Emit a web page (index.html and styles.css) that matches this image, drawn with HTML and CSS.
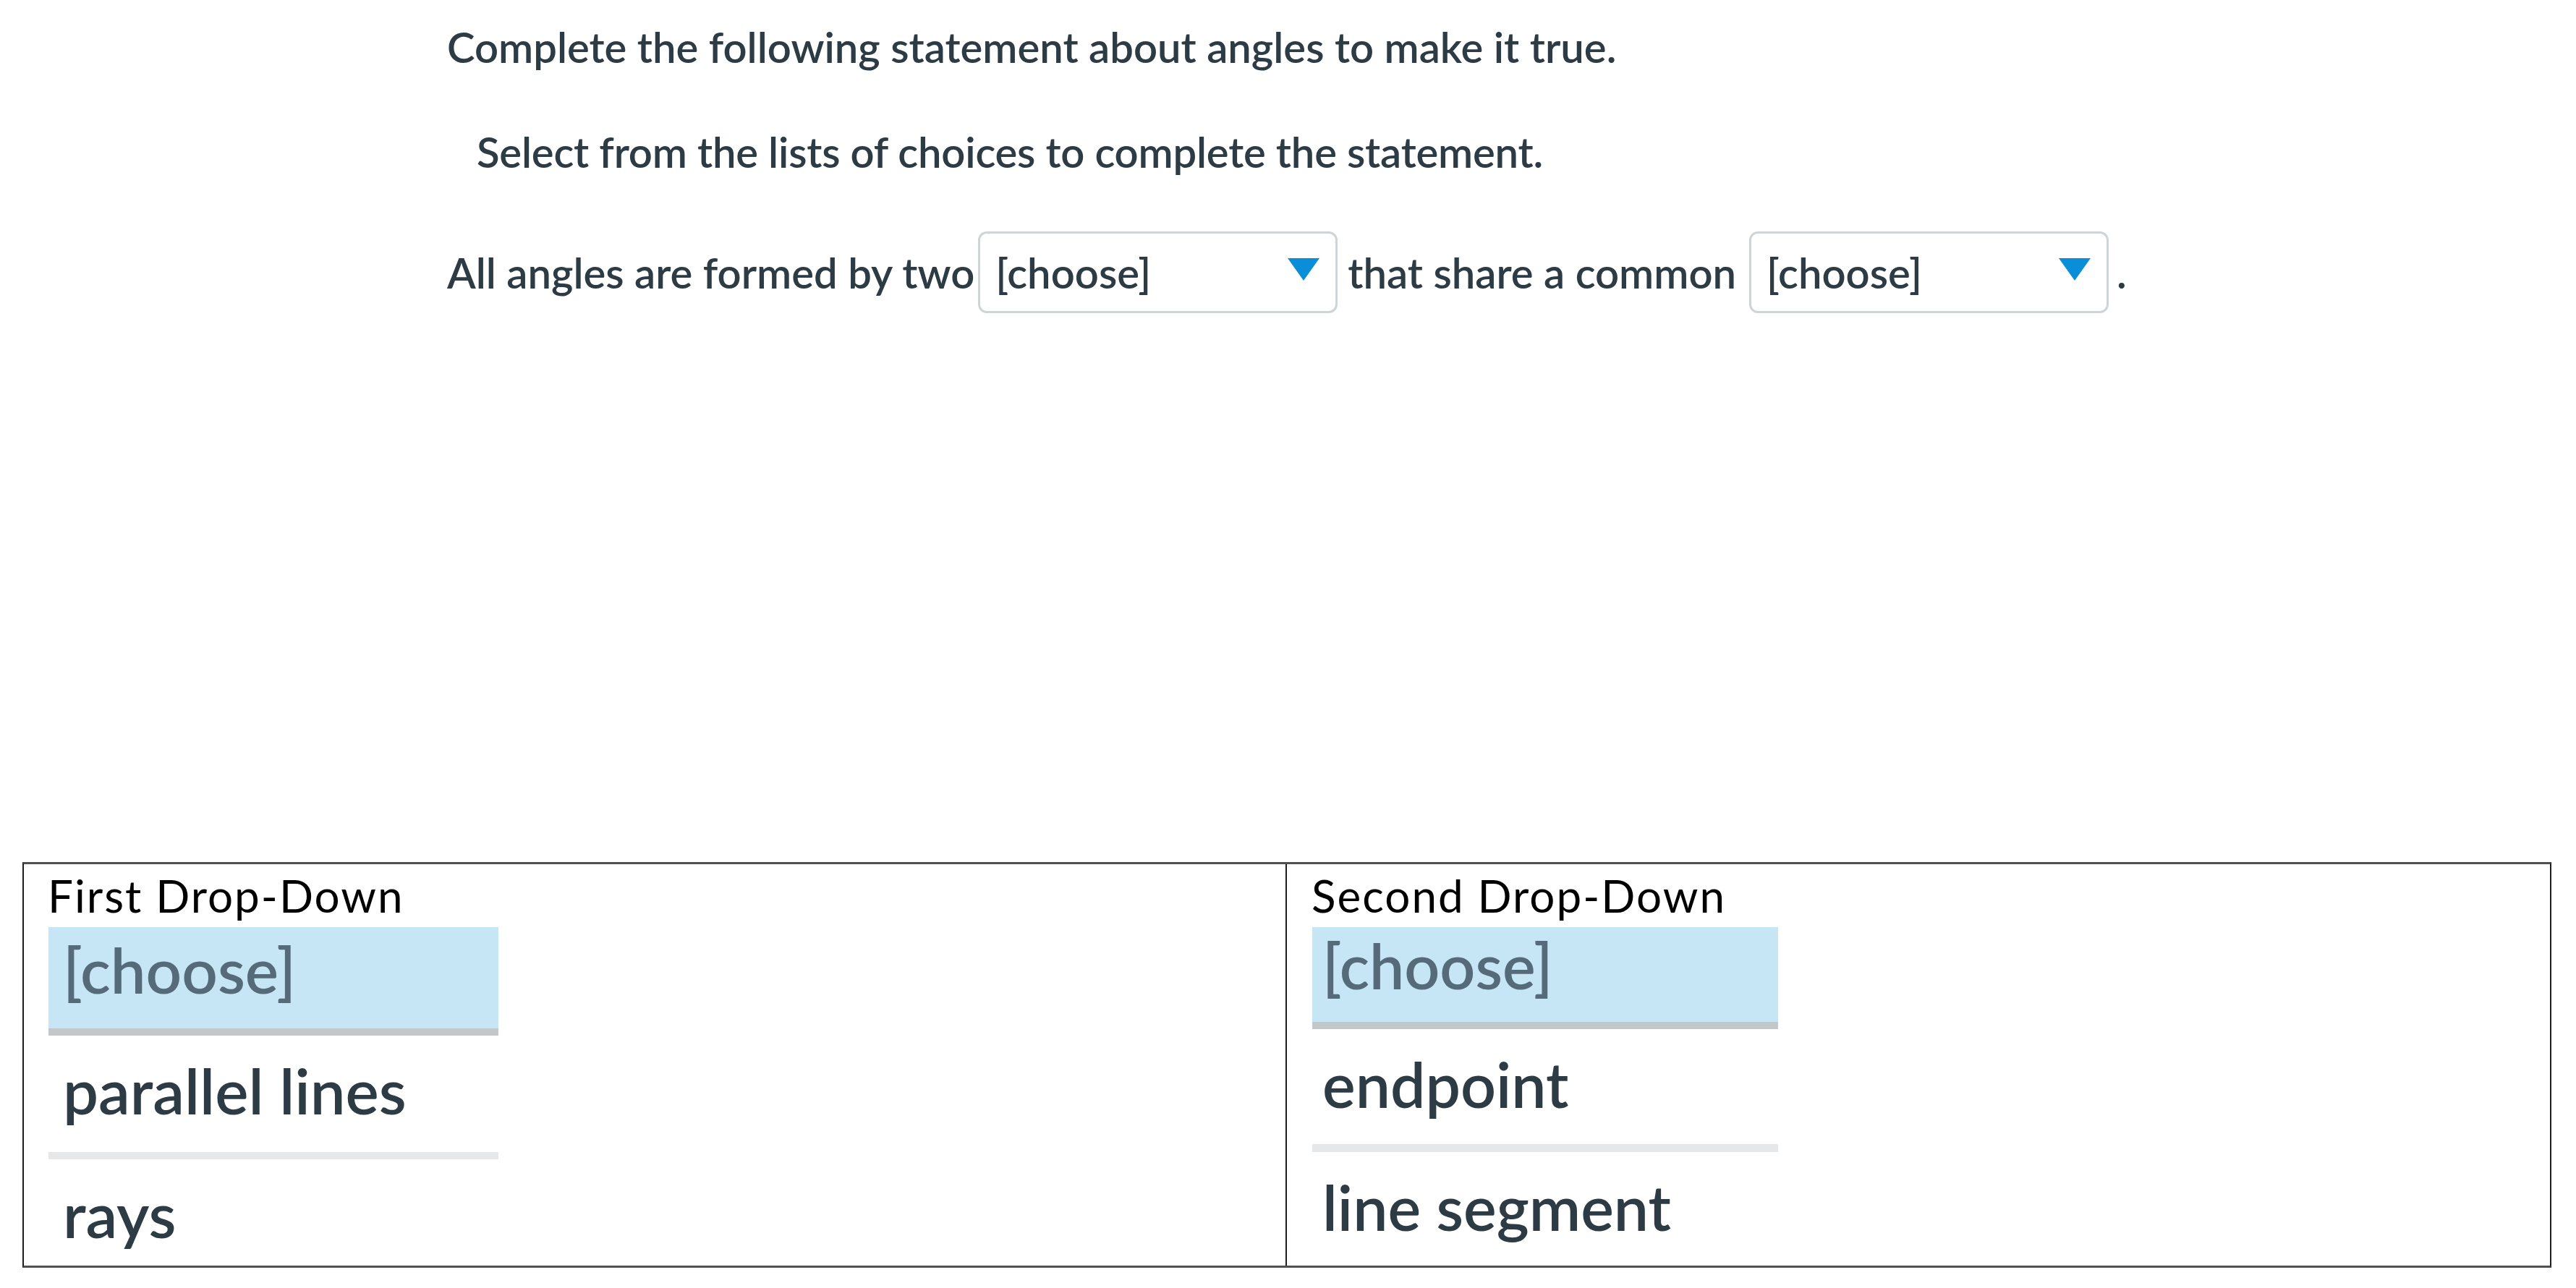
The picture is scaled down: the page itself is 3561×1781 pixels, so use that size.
FILE: index.html
```html
<!DOCTYPE html>
<html lang="en">
<head>
<meta charset="utf-8">
<title>Angles statement</title>
<link rel="stylesheet" href="styles.css">
</head>
<body>
<main class="page">
  <section class="question">
    <p class="prompt">Complete the following statement about angles to make it true.</p>
    <p class="instructions">Select from the lists of choices to complete the statement.</p>
    <div class="statement">
      <span class="phrase">All angles are formed by two</span>
      <div class="select select-first">
        <span class="select-value">[choose]</span>
        <svg class="caret" width="44" height="31" viewBox="0 0 44 31"><polygon points="0,0 44,0 22,31"/></svg>
      </div>
      <span class="phrase">that share a common</span>
      <div class="select select-second">
        <span class="select-value">[choose]</span>
        <svg class="caret" width="44" height="31" viewBox="0 0 44 31"><polygon points="0,0 44,0 22,31"/></svg>
      </div>
      <span class="phrase period">.</span>
    </div>
  </section>

  <section class="answers">
    <div class="cell cell-first">
      <div class="cell-label">First Drop-Down</div>
      <ul class="options options-first">
        <li class="option selected">[choose]</li>
        <li class="option">parallel lines</li>
        <li class="option last">rays</li>
      </ul>
    </div>
    <div class="cell cell-second">
      <div class="cell-label">Second Drop-Down</div>
      <ul class="options options-second">
        <li class="option selected">[choose]</li>
        <li class="option">endpoint</li>
        <li class="option last">line segment</li>
      </ul>
    </div>
  </section>
</main>
</body>
</html>
```

FILE: styles.css
```css
* {
  box-sizing: border-box;
}

html,
body {
  margin: 0;
  padding: 0;
  background: #ffffff;
}

body {
  width: 3561px;
  height: 1781px;
  overflow: hidden;
  font-family: Lato, "Noto Sans", "Liberation Sans", sans-serif;
  color: #2d3b45;
}

/* ---------- question ---------- */

.question {
  height: 1192px;
  padding: 30px 0 0 618px;
}

.prompt,
.instructions {
  margin: 0;
  font-size: 58px;
  font-weight: 600;
  line-height: 70px;
  white-space: nowrap;
}

.instructions {
  margin: 75px 0 0 41px;
  letter-spacing: -0.2px;
}

.statement {
  margin-top: 75px;
  display: flex;
  align-items: baseline;
  font-size: 58px;
  font-weight: 600;
  line-height: 70px;
  white-space: nowrap;
}

.select {
  width: 497px;
  height: 113px;
  margin: 0 14px;
  padding: 0 22px 0 21px;
  display: flex;
  align-items: center;
  justify-content: space-between;
  border: 3px solid #cfd4d7;
  border-radius: 12px;
  background: #ffffff;
}

.select-first {
  margin-left: 5px;
}

.select-second {
  margin-left: 18px;
}

.select-value {
  line-height: 70px;
}

.caret {
  display: block;
  margin-bottom: 8px;
  fill: #0b8ed8;
}

.period {
  margin-left: -3px;
}

/* ---------- answer table ---------- */

.answers {
  margin-left: 31px;
  width: 3496px;
  height: 561px;
  display: grid;
  grid-template-columns: 1746px 1fr;
  border-top: 3px solid #505050;
  border-bottom: 3px solid #505050;
  border-left: 2px solid #1e1e1e;
  border-right: 2px solid #1e1e1e;
  overflow: hidden;
}

.cell {
  height: 555px;
  overflow: hidden;
}

.cell-first {
  border-right: 2px solid #1e1e1e;
}

.cell-label {
  height: 87px;
  margin-left: 33px;
  font-size: 62px;
  font-weight: 400;
  letter-spacing: 2px;
  line-height: 87px;
  color: #000000;
  white-space: nowrap;
}

.cell-second .cell-label {
  margin-left: 34px;
}

.options {
  list-style: none;
  margin: 0;
  padding: 0;
}

.options-first {
  width: 622px;
  margin-left: 34px;
}

.options-second {
  width: 644px;
  margin-left: 35px;
}

.option {
  height: 171px;
  padding-left: 20px;
  font-size: 87px;
  font-weight: 600;
  line-height: 152px;
  color: #2d3b45;
  border-bottom: 10px solid #e6e7e8;
  white-space: nowrap;
}

.option.selected {
  height: 150px;
  line-height: 118px;
  color: #566b7a;
  background: #c7e6f5;
  border-bottom: 10px solid #c3c7ca;
}

.option.last {
  height: 147px;
  border-bottom: none;
}

.options-second .option {
  padding-left: 14px;
  height: 170px;
  font-size: 86px;
  border-bottom-width: 11px;
}

.options-second .option.selected {
  height: 141px;
  line-height: 105px;
  border-bottom-width: 10px;
}

.options-second .option.last {
  height: 157px;
  border-bottom: none;
}
```
